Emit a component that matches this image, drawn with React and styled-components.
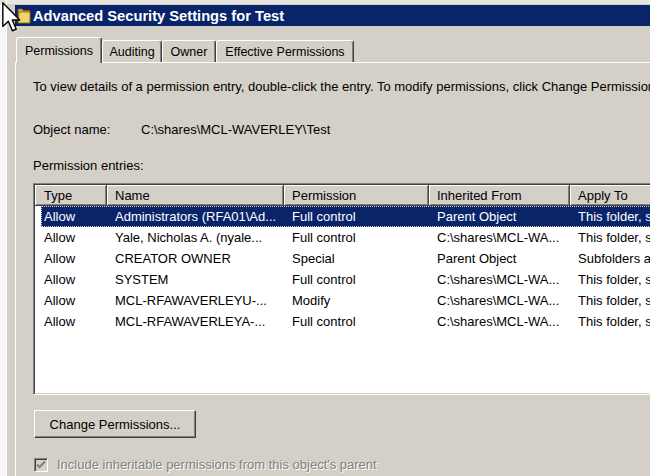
import React from "react";
import styled, { createGlobalStyle } from "styled-components";

const GlobalStyle = createGlobalStyle`
  body {
    margin: 0;
    background: #d4d0c8;
    font-family: "Liberation Sans", Arial, sans-serif;
  }
`;

const tabs = [
  { label: "Permissions", width: 86, selected: true },
  { label: "Auditing", width: 60 },
  { label: "Owner", width: 54 },
  { label: "Effective Permissions", width: 138 },
];

const headers = ["Type", "Name", "Permission", "Inherited From", "Apply To"];

const entries = [
  ["Allow", "Administrators (RFA01\\Ad...", "Full control", "Parent Object", "This folder, s"],
  ["Allow", "Yale, Nicholas A. (nyale...", "Full control", "C:\\shares\\MCL-WA...", "This folder, s"],
  ["Allow", "CREATOR OWNER", "Special", "Parent Object", "Subfolders a"],
  ["Allow", "SYSTEM", "Full control", "C:\\shares\\MCL-WA...", "This folder, s"],
  ["Allow", "MCL-RFAWAVERLEYU-...", "Modify", "C:\\shares\\MCL-WA...", "This folder, s"],
  ["Allow", "MCL-RFAWAVERLEYA-...", "Full control", "C:\\shares\\MCL-WA...", "This folder, s"],
];

const App = () => {
  return (
    <>
      <GlobalStyle />
      <Screen>
        <LeftStrip />
        <Dialog>
          <TitleBar>
            <FolderIcon />
            <TitleText>Advanced Security Settings for Test</TitleText>
          </TitleBar>
          <TabStrip>
            {tabs.map((t) => (
              <Tab key={t.label} $width={t.width} $selected={t.selected}>
                {t.label}
              </Tab>
            ))}
          </TabStrip>
          <Panel>
            <Intro>
              To view details of a permission entry, double-click the entry. To modify permissions, click Change Permissions.
            </Intro>
            <ObjectRow>
              <ObjectLabel>Object name:</ObjectLabel>
              <span>C:\shares\MCL-WAVERLEY\Test</span>
            </ObjectRow>
            <EntriesLabel>Permission entries:</EntriesLabel>
            <ListBox>
              <HeaderRow>
                {headers.map((h, i) => (
                  <HeaderCell key={h} $first={i === 0}>
                    {h}
                  </HeaderCell>
                ))}
              </HeaderRow>
              {entries.map((row, r) => (
                <Row key={r} $selected={r === 0}>
                  {row.map((c, i) => (
                    <Cell key={i} $first={i === 0}>
                      {c}
                    </Cell>
                  ))}
                </Row>
              ))}
            </ListBox>
            <Button>Change Permissions...</Button>
            <CheckRow>
              <CheckBox>
                <svg width="10" height="10" viewBox="0 0 10 10">
                  <path d="M1 4.5 L3.5 7 L9 1.5" stroke="#808080" strokeWidth="2" fill="none" />
                </svg>
              </CheckBox>
              <DisabledLabel>Include inheritable permissions from this object's parent</DisabledLabel>
            </CheckRow>
          </Panel>
        </Dialog>
        <Cursor />
      </Screen>
    </>
  );
};

const FolderIcon = () => (
  <svg width="14" height="18" viewBox="0 0 14 18">
    <path d="M1 2 H5 L6.5 3.5 H13 V16 H1 Z" fill="#d9a93a" stroke="#7a5a10" strokeWidth="0.8" />
    <path d="M2 5 H13 V16 H1 Z" fill="#f3d36c" stroke="#7a5a10" strokeWidth="0.8" />
  </svg>
);

const Cursor = () => (
  <CursorWrap>
    <svg width="19" height="30" viewBox="0 0 12 19">
      <path
        d="M0.5 0.5 L0.5 15.5 L4 12.2 L6.6 18.2 L9 17.2 L6.5 11.4 L11.2 11.4 Z"
        fill="#fff"
        stroke="#000"
        strokeWidth="0.9"
        strokeLinejoin="round"
      />
    </svg>
  </CursorWrap>
);

const Screen = styled.div`
  position: relative;
  width: 650px;
  height: 476px;
  overflow: hidden;
  display: flex;
  background: #fff;
`;

const LeftStrip = styled.div`
  width: 6px;
  flex-shrink: 0;
  background: #f7f7f5;
  border-top: 4px solid #e4e2dc;
`;

const Dialog = styled.div`
  flex: 1;
  min-width: 0;
  overflow: hidden;
  background: #d4d0c8;
  padding: 5px 0 0 9px;
  box-shadow: inset 1px 0 0 #fff, inset 0 4px 0 #e8e6e0;
`;

const TitleBar = styled.div`
  height: 21px;
  background: #0a246a;
  display: flex;
  align-items: center;
  gap: 2px;
  padding-left: 2px;
`;

const TitleText = styled.span`
  color: #fff;
  font-weight: bold;
  font-size: 14.7px;
  white-space: nowrap;
`;

const TabStrip = styled.div`
  margin-top: 11px;
  height: 25px;
  display: flex;
  align-items: flex-end;
  padding-left: 1px;
`;

const Tab = styled.div`
  position: relative;
  z-index: ${(p) => (p.$selected ? 1 : 0)};
  box-sizing: border-box;
  width: ${(p) => p.$width}px;
  height: ${(p) => (p.$selected ? 26 : 22)}px;
  margin-bottom: ${(p) => (p.$selected ? -1 : 0)}px;
  padding-top: ${(p) => (p.$selected ? 0 : 1)}px;
  background: #d4d0c8;
  border: 1px solid;
  border-color: #fff #404040 transparent #fff;
  border-bottom: none;
  border-radius: 3px 3px 0 0;
  box-shadow: inset -1px 0 0 #808080;
  display: flex;
  align-items: center;
  justify-content: center;
  font-size: 12.5px;
  white-space: nowrap;
`;

const Panel = styled.div`
  border-top: 1px solid #fff;
  border-left: 1px solid #fff;
  padding-left: 17px;
  height: 420px;
  font-size: 13px;
  color: #000;
`;

const Intro = styled.div`
  margin-top: 16px;
  line-height: 16px;
  white-space: nowrap;
`;

const ObjectRow = styled.div`
  margin-top: 27px;
  line-height: 16px;
  display: flex;
  white-space: nowrap;
`;

const ObjectLabel = styled.span`
  width: 108px;
`;

const EntriesLabel = styled.div`
  margin-top: 20px;
  line-height: 16px;
`;

const ListBox = styled.div`
  margin-top: 9px;
  box-sizing: border-box;
  width: 700px;
  height: 212px;
  padding: 1px;
  background: #fff;
  border: 1px solid;
  border-color: #808080 #fff #fff #808080;
  box-shadow: inset 1px 1px 0 #404040, inset -1px -1px 0 #d4d0c8;
`;

const HeaderRow = styled.div`
  display: grid;
  grid-template-columns: 72px 177px 145px 141px 200px;
  height: 21px;
`;

const HeaderCell = styled.div`
  box-sizing: border-box;
  background: #d4d0c8;
  border-right: 1px solid #404040;
  border-bottom: 1px solid #404040;
  box-shadow: inset 1px 1px 0 #fff, inset -1px -1px 0 #808080;
  padding-left: ${(p) => (p.$first ? 9 : 8)}px;
  display: flex;
  align-items: center;
  white-space: nowrap;
`;

const Row = styled.div`
  display: grid;
  grid-template-columns: 66px 177px 145px 141px 200px;
  margin-left: 6px;
  height: 21px;
  align-items: center;
  background: ${(p) => (p.$selected ? "#0a246a" : "transparent")};
  color: ${(p) => (p.$selected ? "#fff" : "#000")};
  outline: ${(p) => (p.$selected ? "1px dotted #d4d0c8" : "none")};
  outline-offset: -1px;
`;

const Cell = styled.div`
  padding-left: ${(p) => (p.$first ? 3 : 8)}px;
  white-space: nowrap;
  overflow: hidden;
`;

const Button = styled.button`
  display: block;
  margin: 15px 0 0 1px;
  box-sizing: border-box;
  width: 162px;
  height: 28px;
  padding: 0;
  background: #d4d0c8;
  border: 1px solid;
  border-color: #fff #404040 #404040 #fff;
  box-shadow: inset -1px -1px 0 #808080;
  font-family: "Liberation Sans", Arial, sans-serif;
  font-size: 13px;
  color: #000;
`;

const CheckRow = styled.div`
  margin: 19px 0 0 1px;
  display: flex;
  align-items: center;
  gap: 9px;
`;

const CheckBox = styled.div`
  box-sizing: border-box;
  width: 14px;
  height: 14px;
  background: #d4d0c8;
  border: 1px solid;
  border-color: #808080 #fff #fff #808080;
  box-shadow: inset 1px 1px 0 #404040;
  display: flex;
  align-items: center;
  justify-content: center;
`;

const DisabledLabel = styled.span`
  color: #808080;
  text-shadow: 1px 1px 0 #fff;
  white-space: nowrap;
`;

const CursorWrap = styled.div`
  position: absolute;
  left: 2px;
  top: 2px;
  line-height: 0;
`;

export default App;
